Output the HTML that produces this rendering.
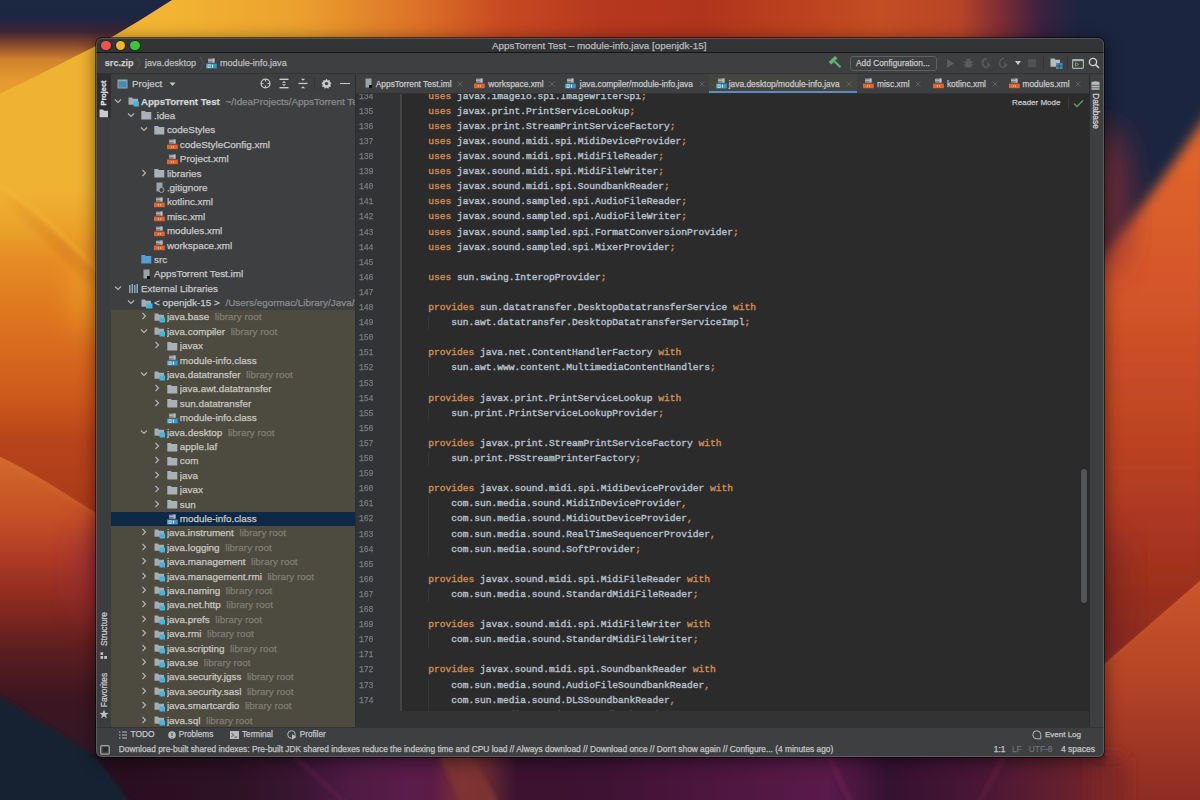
<!DOCTYPE html><html><head><meta charset="utf-8"><style>
*{margin:0;padding:0;box-sizing:border-box}
html,body{width:1200px;height:800px;overflow:hidden;background:#1b2440}
body{position:relative;font-family:"Liberation Sans",sans-serif}
.a{position:absolute}
.t{position:absolute;white-space:pre;line-height:1;-webkit-text-stroke:0.25px currentColor}
.m{font-family:"Liberation Mono",monospace}
</style></head><body>
<svg class="a" style="left:0;top:0" width="1200" height="800" viewBox="0 0 1200 800">
<defs>
<filter id="b6w" x="-100%" y="-50%" width="300%" height="200%"><feGaussianBlur stdDeviation="8"/></filter>
<filter id="b2" x="-10%" y="-10%" width="120%" height="120%"><feGaussianBlur stdDeviation="2"/></filter>
<filter id="b6" x="-20%" y="-20%" width="140%" height="140%"><feGaussianBlur stdDeviation="6"/></filter>
<filter id="b15" x="-50%" y="-50%" width="200%" height="200%"><feGaussianBlur stdDeviation="15"/></filter>
<linearGradient id="lbase" x1="0" y1="0" x2="0" y2="800" gradientUnits="userSpaceOnUse">
 <stop offset="0" stop-color="#f0b232"/><stop offset="0.2375" stop-color="#f0b232"/><stop offset="0.29" stop-color="#eaa02a"/>
 <stop offset="0.325" stop-color="#e68c24"/><stop offset="0.375" stop-color="#e07c20"/><stop offset="0.4375" stop-color="#d86a1e"/><stop offset="0.5" stop-color="#cc581c"/>
 <stop offset="0.55" stop-color="#b8441a"/><stop offset="0.64" stop-color="#a83a1a"/><stop offset="1" stop-color="#a83a1a"/>
</linearGradient>
<linearGradient id="ltop" x1="0" y1="0" x2="0" y2="100" gradientUnits="userSpaceOnUse">
 <stop offset="0" stop-color="#1c2742"/><stop offset="0.18" stop-color="#1d2641"/><stop offset="0.32" stop-color="#3e2634"/>
 <stop offset="0.45" stop-color="#8a4a2e"/><stop offset="0.6" stop-color="#d0842c"/><stop offset="0.8" stop-color="#e6982e"/><stop offset="1" stop-color="#eaa230"/>
</linearGradient>
<linearGradient id="llow" x1="0" y1="450" x2="0" y2="800" gradientUnits="userSpaceOnUse">
 <stop offset="0" stop-color="#d46c2c"/><stop offset="0.2" stop-color="#c44e26"/><stop offset="0.31" stop-color="#ae3a26"/>
 <stop offset="0.43" stop-color="#8c2b20"/><stop offset="0.57" stop-color="#5c1e20"/><stop offset="0.71" stop-color="#3c1622"/><stop offset="1" stop-color="#2a1a28"/>
</linearGradient>
<linearGradient id="rorange" x1="0" y1="120" x2="0" y2="680" gradientUnits="userSpaceOnUse">
 <stop offset="0" stop-color="#e2682a"/><stop offset="0.3" stop-color="#d4562a"/><stop offset="0.58" stop-color="#bc4222"/><stop offset="0.82" stop-color="#9e301f"/><stop offset="1" stop-color="#862820"/>
</linearGradient>
<linearGradient id="rlow" x1="0" y1="580" x2="0" y2="800" gradientUnits="userSpaceOnUse">
 <stop offset="0" stop-color="#cc562a"/><stop offset="0.45" stop-color="#b44426"/><stop offset="1" stop-color="#8e2c24"/>
</linearGradient>
<linearGradient id="ttop" x1="0" y1="0" x2="1200" y2="0" gradientUnits="userSpaceOnUse">
 <stop offset="0.143" stop-color="#f2b432"/><stop offset="0.25" stop-color="#eba02e"/><stop offset="0.35" stop-color="#dc7028"/>
 <stop offset="0.417" stop-color="#c84a22"/><stop offset="0.5" stop-color="#b6381e"/><stop offset="0.583" stop-color="#b0341c"/>
 <stop offset="0.667" stop-color="#bc421f"/><stop offset="0.733" stop-color="#c44e22"/><stop offset="0.8" stop-color="#b84428"/>
 <stop offset="0.835" stop-color="#7a2c36"/><stop offset="0.868" stop-color="#3a2240"/><stop offset="0.9" stop-color="#1b2540"/><stop offset="1" stop-color="#1b2540"/>
</linearGradient>
<linearGradient id="tnavy" x1="0" y1="0" x2="0" y2="40" gradientUnits="userSpaceOnUse">
 <stop offset="0" stop-color="#1c2742"/><stop offset="0.6" stop-color="#1e2640"/><stop offset="1" stop-color="#3a2232"/>
</linearGradient>
<linearGradient id="bot" x1="0" y1="0" x2="1200" y2="0" gradientUnits="userSpaceOnUse">
 <stop offset="0.08" stop-color="#2a1020"/><stop offset="0.11" stop-color="#2a0e1e"/><stop offset="0.2" stop-color="#2e1226"/>
 <stop offset="0.25" stop-color="#3a1632"/><stop offset="0.29" stop-color="#4e1a44"/><stop offset="0.34" stop-color="#5a1c4a"/>
 <stop offset="0.36" stop-color="#5a1c46"/><stop offset="0.385" stop-color="#7a3034"/><stop offset="0.405" stop-color="#6a2a34"/><stop offset="0.43" stop-color="#3c1230"/>
 <stop offset="0.5" stop-color="#3e1232"/><stop offset="0.6" stop-color="#4e1640"/><stop offset="0.69" stop-color="#5a1a4a"/><stop offset="0.715" stop-color="#4a1640"/>
 <stop offset="0.74" stop-color="#341230"/><stop offset="0.82" stop-color="#4a1636"/><stop offset="0.87" stop-color="#5e1e30"/>
 <stop offset="0.92" stop-color="#76242a"/><stop offset="1" stop-color="#86282a"/>
</linearGradient>
<linearGradient id="band" x1="0" y1="0" x2="100" y2="0" gradientUnits="userSpaceOnUse"><stop offset="0" stop-color="#d47a20" stop-opacity="0"/><stop offset="0.5" stop-color="#d47a20" stop-opacity="0.35"/><stop offset="1" stop-color="#d07020" stop-opacity="0.8"/></linearGradient>
</defs>
<rect width="1200" height="800" fill="#1b2540"/>
<!-- left strip -->
<g>
<rect x="0" y="0" width="110" height="800" fill="url(#lbase)"/>

<path d="M0 188 C 35 212, 70 245, 110 287 L110 302 C 80 277, 45 240, 0 200 Z" fill="url(#band)" filter="url(#b2)"/>
<path d="M-5 184 C 30 202, 60 232, 110 283" stroke="#f6c546" stroke-width="1.5" fill="none" opacity="0.7" filter="url(#b2)"/>
<ellipse cx="92" cy="290" rx="22" ry="40" fill="#eea62a" opacity="0.6" filter="url(#b15)"/>
<path d="M-10 452 C 30 470, 60 490, 110 522 L110 810 L-10 810 Z" fill="url(#llow)"/>
<path d="M-10 455 C 30 472, 60 492, 110 524" stroke="#e07a3a" stroke-width="1.2" fill="none" opacity="0.6" filter="url(#b2)"/>
<ellipse cx="100" cy="570" rx="25" ry="50" fill="#8a2840" opacity="0.5" filter="url(#b15)"/>

</g>
<!-- top strip -->
<rect x="96" y="0" width="1010" height="38" fill="url(#ttop)"/>
<path d="M-10 -10 L178 -10 L172 0 C 150 14, 125 30, 96 46 C 60 64, 30 80, -10 98 Z" fill="url(#ltop)"/>
<!-- right strip -->
<g>
<rect x="1100" y="0" width="100" height="800" fill="#1b2540"/>
<path d="M1210 110 L1210 700 L1095 700 L1095 262 C 1120 235, 1160 185, 1210 110 Z" fill="url(#rorange)" filter="url(#b6)"/>
<ellipse cx="1108" cy="200" rx="22" ry="75" fill="#8a2e36" opacity="0.75" filter="url(#b15)"/>
<ellipse cx="1112" cy="600" rx="18" ry="70" fill="#6a2220" opacity="0.4" filter="url(#b15)"/>
<path d="M1210 572 L1210 810 L1095 810 L1095 672 Z" fill="url(#rlow)"/>
<path d="M1210 573 L1095 673" stroke="#dc6a36" stroke-width="1" opacity="0.6" filter="url(#b2)"/>
</g>
<!-- bottom strip -->
<rect x="90" y="755" width="1016" height="50" fill="url(#bot)"/>



<path d="M438 755 L472 755 L500 805 L462 805 Z" fill="#7e3430" opacity="0.85" filter="url(#b2)"/>
<path d="M293 755 L348 805" stroke="#6a2052" stroke-width="3" opacity="0.7" filter="url(#b2)"/>
<path d="M828 755 L852 805" stroke="#7a2a5a" stroke-width="3" opacity="0.6" filter="url(#b2)"/>
<path d="M1005 755 L978 805" stroke="#7a2a40" stroke-width="3" opacity="0.5" filter="url(#b2)"/>
<path d="M-10 690 L 96 757 L 136 810 L-10 810 Z" fill="#172030" filter="url(#b2)"/>
<rect x="1092" y="757" width="34" height="60" fill="#7e2828" filter="url(#b6w)"/>
</svg>

<div class="a" style="left:96.2px;top:37.5px;width:1007.8px;height:719px;border-radius:6px;background:#3e3f41;overflow:hidden;box-shadow:0 0 0 1px rgba(0,0,0,0.55), 0 3px 16px 2px rgba(0,0,0,0.45)">
<div class="a" style="left:0.30px;top:0.00px;width:1007.80px;height:15.00px;background:#323436;"></div>
<div class="a" style="left:0.30px;top:14.80px;width:1007.80px;height:1.00px;background:#161617;"></div>
<div class="a" style="left:5.20px;top:3.00px;width:9.6px;height:9.6px;border-radius:50%;background:#f0524c;box-shadow:0 0 0 0.7px rgba(0,0,0,0.35)"></div>
<div class="a" style="left:19.70px;top:3.00px;width:9.6px;height:9.6px;border-radius:50%;background:#f4b52c;box-shadow:0 0 0 0.7px rgba(0,0,0,0.35)"></div>
<div class="a" style="left:34.05px;top:3.00px;width:9.6px;height:9.6px;border-radius:50%;background:#3cc43a;box-shadow:0 0 0 0.7px rgba(0,0,0,0.35)"></div>
<div class="t" style="left:395.80px;top:3.15px;font-size:9.9px;color:#b9babb;font-weight:normal;font-family:"Liberation Sans",sans-serif;">AppsTorrent Test – module-info.java [openjdk-15]</div>
<div class="a" style="left:0.30px;top:15.80px;width:1007.80px;height:20.00px;background:#3e3f41;"></div>
<div class="t" style="left:8.60px;top:21.35px;font-size:9.1px;color:#c8c9ca;font-weight:bold;font-family:"Liberation Sans",sans-serif;">src.zip</div>
<div class="t" style="left:48.80px;top:21.35px;font-size:9.1px;color:#bbbcbd;font-weight:normal;font-family:"Liberation Sans",sans-serif;">java.desktop</div>
<div class="t" style="left:123.80px;top:21.35px;font-size:9.1px;color:#bbbcbd;font-weight:normal;font-family:"Liberation Sans",sans-serif;">module-info.java</div>
<svg class="a" style="left:39.8px;top:18.9px" width="6" height="14"><path d="M1 1L4.5 7L1 13" stroke="#55585a" stroke-width="0.8" fill="none"/></svg>
<svg class="a" style="left:102.8px;top:18.9px" width="6" height="14"><path d="M1 1L4.5 7L1 13" stroke="#55585a" stroke-width="0.8" fill="none"/></svg>
<svg style="position:absolute;left:110.3px;top:20.5px" width="12" height="11" viewBox="0 0 12 11"><path d="M2 1.2H8.5M2 2.6H8.5M2 4H8.5" stroke="#b8bfc4" stroke-width="1"/><rect x="6.5" y="0.5" width="2" height="4" fill="#b8bfc4"/><rect x="0" y="5.6" width="10.8" height="4.8" fill="#3d95c4"/><rect x="2" y="6.8" width="2.2" height="2.6" fill="none" stroke="#d8e6ee" stroke-width="0.8"/><rect x="6" y="6.6" width="1" height="3" fill="#d8e6ee"/></svg>
<div class="a" style="left:753.60px;top:18.10px;width:87.00px;height:15.20px;background:transparent;border:1px solid #5e6164;border-radius:3px;"></div>
<div class="t" style="left:759.80px;top:21.71px;font-size:8.37px;color:#c4c5c6;font-weight:normal;font-family:"Liberation Sans",sans-serif;">Add Configuration...</div>
<svg class="a" style="left:733.3px;top:18.5px" width="14" height="14" viewBox="0 0 14 14"><g transform="rotate(-45 7 7)"><rect x="2.6" y="1.2" width="8.8" height="3.6" rx="0.6" fill="#62b072"/><rect x="6.1" y="4.6" width="2.1" height="8.6" fill="#62b072"/></g></svg>
<svg class="a" style="left:849.8px;top:20.5px" width="9" height="11" viewBox="0 0 9 11"><path d="M1 1L8 5.5L1 10Z" fill="#5b5e60"/></svg>
<svg class="a" style="left:866.8px;top:19.5px" width="11" height="12" viewBox="0 0 11 12"><ellipse cx="5.5" cy="7" rx="3.3" ry="3.8" fill="#5a5d5f"/><path d="M3.5 3.2Q5.5 1 7.5 3.2" stroke="#5a5d5f" stroke-width="1.4" fill="none"/><path d="M0.5 5H10.5M0.5 8H10.5M1.5 11L3 9.5M9.5 11L8 9.5" stroke="#5a5d5f" stroke-width="1"/></svg>
<svg class="a" style="left:884.8px;top:19.5px" width="12" height="12" viewBox="0 0 12 12"><path d="M6 1.5A4.5 4.5 0 1 0 6 10.5" stroke="#55585a" stroke-width="2" fill="none"/><path d="M6 5L10 8L6 11Z" fill="#55585a"/></svg>
<svg class="a" style="left:901.8px;top:19.5px" width="13" height="12" viewBox="0 0 13 12"><path d="M6 1.5A4.5 4.5 0 1 0 6 10.5" stroke="#55585a" stroke-width="1.5" fill="none"/><path d="M6 5L10 8L6 11Z" fill="#55585a"/></svg>
<svg class="a" style="left:918.8px;top:23.5px" width="6" height="4" viewBox="0 0 6 4"><path d="M0 0H6L3 4Z" fill="#c8c9ca"/></svg>
<svg class="a" style="left:932.3px;top:21.0px" width="8" height="8" viewBox="0 0 8 8"><rect width="8" height="8" fill="#4f5254"/></svg>
<div class="a" style="left:947.30px;top:18.50px;width:0.80px;height:14.00px;background:#323436;"></div>
<svg class="a" style="left:953.8px;top:19.5px" width="13" height="13" viewBox="0 0 13 13"><path d="M0.5 1.5h4l1 1.2H10v7H0.5z" fill="#b5bcc2"/><rect x="6" y="6" width="6.5" height="6" fill="#3d8fc4"/><path d="M6 9h6.5M9.2 6v6" stroke="#3e3f41" stroke-width="0.8"/></svg>
<div class="a" style="left:971.30px;top:18.50px;width:0.80px;height:14.00px;background:#323436;"></div>
<svg class="a" style="left:976.3px;top:21.0px" width="12" height="10" viewBox="0 0 12 10"><rect x="0.6" y="0.6" width="10.8" height="8.8" rx="0.8" fill="#37433b" stroke="#a9b1ac" stroke-width="1.2"/><rect x="0.6" y="0.6" width="10.8" height="1.6" fill="#a9b1ac"/><path d="M3.5 3.6L6.6 5.4L3.5 7.2Z" fill="none" stroke="#8a968e" stroke-width="0.9"/></svg>
<svg class="a" style="left:992.3px;top:19.5px" width="12" height="12" viewBox="0 0 12 12"><circle cx="5" cy="5" r="3.6" stroke="#d0d1d2" stroke-width="1.4" fill="none"/><path d="M7.6 7.6L11 11" stroke="#d0d1d2" stroke-width="1.6"/></svg>
<div class="a" style="left:0.30px;top:35.50px;width:1007.80px;height:0.80px;background:#323436;"></div>
<div class="a" style="left:0.30px;top:36.00px;width:14.50px;height:683.00px;background:#3b3d3f;"></div>
<div class="a" style="left:1.20px;top:36.30px;width:13.30px;height:44.50px;background:#2d2f31;"></div>
<div class="a" style="left:14.40px;top:36.00px;width:0.80px;height:653.00px;background:#2f3133;"></div>
<div class="t" style="left:7.40px;top:55.00px;font-size:7.4px;color:#e2e3e4;font-weight:bold;transform:translate(-50%,-50%) rotate(-90deg);">Project</div>
<svg class="a" style="left:2.8px;top:71.0px" width="10" height="9" viewBox="0 0 10 9"><path d="M0.5 0.5h3.5l1 1.2H9v6.5H0.5z" fill="#c8cacc"/></svg>
<div class="t" style="left:7.70px;top:591.00px;font-size:8.4px;color:#c8c9ca;font-weight:normal;transform:translate(-50%,-50%) rotate(-90deg);">Structure</div>
<svg class="a" style="left:3.8px;top:614.0px" width="8" height="8" viewBox="0 0 8 8"><rect x="0.5" y="0.3" width="2.6" height="2.6" fill="#c4c5c6"/><rect x="0.5" y="4" width="2.6" height="2.8" fill="#c4c5c6"/><rect x="4.2" y="4" width="2.8" height="2.8" fill="#c4c5c6"/></svg>
<div class="t" style="left:7.70px;top:652.50px;font-size:8.4px;color:#c8c9ca;font-weight:normal;transform:translate(-50%,-50%) rotate(-90deg);">Favorites</div>
<svg class="a" style="left:2.6px;top:671.5px" width="10" height="10" viewBox="0 0 10 10"><path d="M5 0.5L6.3 3.7L9.6 3.9L7 6L7.9 9.3L5 7.5L2.1 9.3L3 6L0.4 3.9L3.7 3.7Z" fill="#b9babb"/></svg>
<div class="a" style="left:15.20px;top:36.30px;width:244.00px;height:653.00px;background:#3e3f41;"></div>
<svg class="a" style="left:21.3px;top:41.5px" width="11" height="10" viewBox="0 0 11 10"><rect x="0.5" y="0.5" width="10" height="9" fill="#9aa3a9"/><rect x="1.5" y="2.2" width="8" height="6.3" fill="#3d8fb8"/></svg>
<div class="t" style="left:35.80px;top:41.43px;font-size:9.74px;color:#c4c5c6;font-weight:normal;font-family:"Liberation Sans",sans-serif;">Project</div>
<svg class="a" style="left:72.6px;top:44.3px" width="7" height="5" viewBox="0 0 7 5"><path d="M0.5 0.5H6.5L3.5 4Z" fill="#c4c5c6"/></svg>
<svg class="a" style="left:163.8px;top:40.3px" width="11" height="11" viewBox="0 0 11 11"><circle cx="5.5" cy="5.5" r="4.4" stroke="#c9cacb" stroke-width="1.3" fill="none"/><path d="M5.5 1.2V3.4M5.5 7.6V9.8M1.2 5.5H3.4M7.6 5.5H9.8" stroke="#c9cacb" stroke-width="1.2"/></svg>
<svg class="a" style="left:183.1px;top:40.3px" width="10" height="11" viewBox="0 0 10 11"><rect x="0.5" y="0.6" width="9" height="1.4" fill="#c9cacb"/><rect x="0.5" y="9" width="9" height="1.4" fill="#c9cacb"/><path d="M2.8 4.8L5 3L7.2 4.8ZM2.8 6.2L5 8L7.2 6.2Z" fill="#c9cacb"/></svg>
<svg class="a" style="left:201.6px;top:40.3px" width="10" height="11" viewBox="0 0 10 11"><rect x="0.5" y="4.8" width="9" height="1.3" fill="#c9cacb"/><path d="M2.8 0.8L5 2.8L7.2 0.8ZM2.8 10.2L5 8.2L7.2 10.2Z" fill="#c9cacb"/></svg>
<div class="a" style="left:218.30px;top:39.50px;width:0.80px;height:13.00px;background:#363739;"></div>
<svg class="a" style="left:225.0px;top:40.3px" width="11" height="11" viewBox="0 0 11 11"><path d="M5.5 0.6L6.6 2.4L8.6 1.9L8.9 3.9L10.6 5L9.3 6.6L10 8.5L8 8.9L7.2 10.7L5.5 9.6L3.8 10.7L3 8.9L1 8.5L1.7 6.6L0.4 5L2.1 3.9L2.4 1.9L4.4 2.4Z" fill="#c9cacb"/><circle cx="5.5" cy="5.6" r="1.7" fill="#3e3f41"/></svg>
<div class="a" style="left:244.30px;top:45.10px;width:9.50px;height:1.30px;background:#c9cacb;"></div>
<div class="a" style="left:15.20px;top:272.73px;width:244.00px;height:14.70px;background:#4d4a40;"></div>
<div class="a" style="left:15.20px;top:287.12px;width:244.00px;height:14.70px;background:#4d4a40;"></div>
<div class="a" style="left:15.20px;top:301.52px;width:244.00px;height:14.70px;background:#4d4a40;"></div>
<div class="a" style="left:15.20px;top:315.91px;width:244.00px;height:14.70px;background:#4d4a40;"></div>
<div class="a" style="left:15.20px;top:330.31px;width:244.00px;height:14.70px;background:#4d4a40;"></div>
<div class="a" style="left:15.20px;top:344.70px;width:244.00px;height:14.70px;background:#4d4a40;"></div>
<div class="a" style="left:15.20px;top:359.10px;width:244.00px;height:14.70px;background:#4d4a40;"></div>
<div class="a" style="left:15.20px;top:373.49px;width:244.00px;height:14.70px;background:#4d4a40;"></div>
<div class="a" style="left:15.20px;top:387.89px;width:244.00px;height:14.70px;background:#4d4a40;"></div>
<div class="a" style="left:15.20px;top:402.28px;width:244.00px;height:14.70px;background:#4d4a40;"></div>
<div class="a" style="left:15.20px;top:416.68px;width:244.00px;height:14.70px;background:#4d4a40;"></div>
<div class="a" style="left:15.20px;top:431.07px;width:244.00px;height:14.70px;background:#4d4a40;"></div>
<div class="a" style="left:15.20px;top:445.47px;width:244.00px;height:14.70px;background:#4d4a40;"></div>
<div class="a" style="left:15.20px;top:459.86px;width:244.00px;height:14.70px;background:#4d4a40;"></div>
<div class="a" style="left:15.20px;top:474.26px;width:244.00px;height:14.70px;background:#0d2945;"></div>
<div class="a" style="left:15.20px;top:488.65px;width:244.00px;height:14.70px;background:#4d4a40;"></div>
<div class="a" style="left:15.20px;top:503.05px;width:244.00px;height:14.70px;background:#4d4a40;"></div>
<div class="a" style="left:15.20px;top:517.44px;width:244.00px;height:14.70px;background:#4d4a40;"></div>
<div class="a" style="left:15.20px;top:531.84px;width:244.00px;height:14.70px;background:#4d4a40;"></div>
<div class="a" style="left:15.20px;top:546.23px;width:244.00px;height:14.70px;background:#4d4a40;"></div>
<div class="a" style="left:15.20px;top:560.63px;width:244.00px;height:14.70px;background:#4d4a40;"></div>
<div class="a" style="left:15.20px;top:575.02px;width:244.00px;height:14.70px;background:#4d4a40;"></div>
<div class="a" style="left:15.20px;top:589.42px;width:244.00px;height:14.70px;background:#4d4a40;"></div>
<div class="a" style="left:15.20px;top:603.81px;width:244.00px;height:14.70px;background:#4d4a40;"></div>
<div class="a" style="left:15.20px;top:618.21px;width:244.00px;height:14.70px;background:#4d4a40;"></div>
<div class="a" style="left:15.20px;top:632.60px;width:244.00px;height:14.70px;background:#4d4a40;"></div>
<div class="a" style="left:15.20px;top:647.00px;width:244.00px;height:14.70px;background:#4d4a40;"></div>
<div class="a" style="left:15.20px;top:661.39px;width:244.00px;height:14.70px;background:#4d4a40;"></div>
<div class="a" style="left:15.20px;top:675.79px;width:244.00px;height:13.31px;background:#4d4a40;"></div>

<svg class="a" style="left:18.2px;top:59.0px" width="8" height="8" viewBox="0 0 8 8"><path d="M1.0 2.5L4.0 5.5L7.0 2.5" stroke="#b4b5b6" stroke-width="1.15" fill="none"/></svg>
<svg style="position:absolute;left:31.7px;top:58.5px" width="12" height="11" viewBox="0 0 12 11"><path d="M0.5 1.5h3.5l1 1.2H10v6H0.5z" fill="#a4adb3"/><rect x="5.5" y="5.5" width="5.5" height="5" fill="#40b6e0"/></svg>
<div class="t" style="left:44.80px;top:57.24px;line-height:1.4;font-size:9.65px;color:#d4d5d6;font-weight:bold;width:214.4px;overflow:hidden">AppsTorrent Test<span style="font-weight:normal;color:#8a8b8c;font-size:9.9px;margin-left:5.6px">~/IdeaProjects/AppsTorrent Test</span></div>

<svg class="a" style="left:31.1px;top:73.4px" width="8" height="8" viewBox="0 0 8 8"><path d="M1.0 2.5L4.0 5.5L7.0 2.5" stroke="#b4b5b6" stroke-width="1.15" fill="none"/></svg>
<svg style="position:absolute;left:44.6px;top:72.9px" width="12" height="11" viewBox="0 0 12 11"><path d="M0.3 1h3.6l1 1.1H10.3v7.5H0.3z" fill="#a9b1b7"/></svg>
<div class="t" style="left:57.75px;top:71.47px;line-height:1.4;font-size:9.9px;color:#c8c9ca;font-weight:normal;width:201.4px;overflow:hidden">.idea</div>

<svg class="a" style="left:44.1px;top:87.8px" width="8" height="8" viewBox="0 0 8 8"><path d="M1.0 2.5L4.0 5.5L7.0 2.5" stroke="#b4b5b6" stroke-width="1.15" fill="none"/></svg>
<svg style="position:absolute;left:57.6px;top:87.3px" width="12" height="11" viewBox="0 0 12 11"><path d="M0.3 1h3.6l1 1.1H10.3v7.5H0.3z" fill="#a9b1b7"/></svg>
<div class="t" style="left:70.70px;top:85.86px;line-height:1.4;font-size:9.9px;color:#c8c9ca;font-weight:normal;width:188.5px;overflow:hidden">codeStyles</div>
<svg style="position:absolute;left:70.5px;top:101.7px" width="12" height="11" viewBox="0 0 12 11"><path d="M2 1.2H8.5M2 2.6H8.5M2 4H8.5" stroke="#b8bfc4" stroke-width="1"/><rect x="6.5" y="0.5" width="2" height="4" fill="#b8bfc4"/><rect x="0" y="5.6" width="10.8" height="4.6" fill="#e0652d"/><path d="M3.6 7.9l1.2-1v2zM7.2 7.9l-1.2-1v2z" fill="#f4d6c6"/></svg>
<div class="t" style="left:83.65px;top:100.25px;line-height:1.4;font-size:9.9px;color:#c8c9ca;font-weight:normal;width:175.5px;overflow:hidden">codeStyleConfig.xml</div>
<svg style="position:absolute;left:70.5px;top:116.1px" width="12" height="11" viewBox="0 0 12 11"><path d="M2 1.2H8.5M2 2.6H8.5M2 4H8.5" stroke="#b8bfc4" stroke-width="1"/><rect x="6.5" y="0.5" width="2" height="4" fill="#b8bfc4"/><rect x="0" y="5.6" width="10.8" height="4.6" fill="#e0652d"/><path d="M3.6 7.9l1.2-1v2zM7.2 7.9l-1.2-1v2z" fill="#f4d6c6"/></svg>
<div class="t" style="left:83.65px;top:114.65px;line-height:1.4;font-size:9.9px;color:#c8c9ca;font-weight:normal;width:175.5px;overflow:hidden">Project.xml</div>

<svg class="a" style="left:44.1px;top:131.0px" width="8" height="8" viewBox="0 0 8 8"><path d="M2.5 1.0L5.5 4.0L2.5 7.0" stroke="#b4b5b6" stroke-width="1.15" fill="none"/></svg>
<svg style="position:absolute;left:57.6px;top:130.5px" width="12" height="11" viewBox="0 0 12 11"><path d="M0.3 1h3.6l1 1.1H10.3v7.5H0.3z" fill="#a9b1b7"/></svg>
<div class="t" style="left:70.70px;top:129.04px;line-height:1.4;font-size:9.9px;color:#c8c9ca;font-weight:normal;width:188.5px;overflow:hidden">libraries</div>
<svg style="position:absolute;left:57.6px;top:144.9px" width="12" height="11" viewBox="0 0 12 11"><rect x="2.5" y="0.5" width="6" height="9" fill="#9aa3a9"/><circle cx="7.5" cy="8" r="2.5" fill="#3e3f41" stroke="#9aa3a9" stroke-width="1"/></svg>
<div class="t" style="left:70.70px;top:143.44px;line-height:1.4;font-size:9.9px;color:#c8c9ca;font-weight:normal;width:188.5px;overflow:hidden">.gitignore</div>
<svg style="position:absolute;left:57.6px;top:159.3px" width="12" height="11" viewBox="0 0 12 11"><path d="M2 1.2H8.5M2 2.6H8.5M2 4H8.5" stroke="#b8bfc4" stroke-width="1"/><rect x="6.5" y="0.5" width="2" height="4" fill="#b8bfc4"/><rect x="0" y="5.6" width="10.8" height="4.6" fill="#e0652d"/><path d="M3.6 7.9l1.2-1v2zM7.2 7.9l-1.2-1v2z" fill="#f4d6c6"/></svg>
<div class="t" style="left:70.70px;top:157.83px;line-height:1.4;font-size:9.9px;color:#c8c9ca;font-weight:normal;width:188.5px;overflow:hidden">kotlinc.xml</div>
<svg style="position:absolute;left:57.6px;top:173.7px" width="12" height="11" viewBox="0 0 12 11"><path d="M2 1.2H8.5M2 2.6H8.5M2 4H8.5" stroke="#b8bfc4" stroke-width="1"/><rect x="6.5" y="0.5" width="2" height="4" fill="#b8bfc4"/><rect x="0" y="5.6" width="10.8" height="4.6" fill="#e0652d"/><path d="M3.6 7.9l1.2-1v2zM7.2 7.9l-1.2-1v2z" fill="#f4d6c6"/></svg>
<div class="t" style="left:70.70px;top:172.23px;line-height:1.4;font-size:9.9px;color:#c8c9ca;font-weight:normal;width:188.5px;overflow:hidden">misc.xml</div>
<svg style="position:absolute;left:57.6px;top:188.1px" width="12" height="11" viewBox="0 0 12 11"><path d="M2 1.2H8.5M2 2.6H8.5M2 4H8.5" stroke="#b8bfc4" stroke-width="1"/><rect x="6.5" y="0.5" width="2" height="4" fill="#b8bfc4"/><rect x="0" y="5.6" width="10.8" height="4.6" fill="#e0652d"/><path d="M3.6 7.9l1.2-1v2zM7.2 7.9l-1.2-1v2z" fill="#f4d6c6"/></svg>
<div class="t" style="left:70.70px;top:186.62px;line-height:1.4;font-size:9.9px;color:#c8c9ca;font-weight:normal;width:188.5px;overflow:hidden">modules.xml</div>
<svg style="position:absolute;left:57.6px;top:202.4px" width="12" height="11" viewBox="0 0 12 11"><path d="M2 1.2H8.5M2 2.6H8.5M2 4H8.5" stroke="#b8bfc4" stroke-width="1"/><rect x="6.5" y="0.5" width="2" height="4" fill="#b8bfc4"/><rect x="0" y="5.6" width="10.8" height="4.6" fill="#e0652d"/><path d="M3.6 7.9l1.2-1v2zM7.2 7.9l-1.2-1v2z" fill="#f4d6c6"/></svg>
<div class="t" style="left:70.70px;top:201.02px;line-height:1.4;font-size:9.9px;color:#c8c9ca;font-weight:normal;width:188.5px;overflow:hidden">workspace.xml</div>
<svg style="position:absolute;left:44.6px;top:216.8px" width="12" height="11" viewBox="0 0 12 11"><path d="M0.3 1h3.6l1 1.1H10.3v7.5H0.3z" fill="#4f9fd6"/></svg>
<div class="t" style="left:57.75px;top:215.41px;line-height:1.4;font-size:9.9px;color:#c8c9ca;font-weight:normal;width:201.4px;overflow:hidden">src</div>
<svg style="position:absolute;left:44.6px;top:231.2px" width="12" height="11" viewBox="0 0 12 11"><rect x="2.5" y="0.5" width="6" height="9" fill="#9aa3a9"/><rect x="6" y="7" width="3" height="3" fill="#111"/></svg>
<div class="t" style="left:57.75px;top:229.81px;line-height:1.4;font-size:9.9px;color:#c8c9ca;font-weight:normal;width:201.4px;overflow:hidden">AppsTorrent Test.iml</div>

<svg class="a" style="left:18.2px;top:246.1px" width="8" height="8" viewBox="0 0 8 8"><path d="M1.0 2.5L4.0 5.5L7.0 2.5" stroke="#b4b5b6" stroke-width="1.15" fill="none"/></svg>
<svg style="position:absolute;left:31.7px;top:245.6px" width="12" height="11" viewBox="0 0 12 11"><rect x="1" y="2" width="1.5" height="8" fill="#9aa3a9"/><rect x="3.5" y="1" width="1.5" height="9" fill="#9aa3a9"/><rect x="6" y="2" width="1.5" height="8" fill="#5fb7e0"/><rect x="8.5" y="1" width="1.5" height="9" fill="#9aa3a9"/></svg>
<div class="t" style="left:44.80px;top:244.20px;line-height:1.4;font-size:9.9px;color:#c8c9ca;font-weight:normal;width:214.4px;overflow:hidden">External Libraries</div>

<svg class="a" style="left:31.1px;top:260.5px" width="8" height="8" viewBox="0 0 8 8"><path d="M1.0 2.5L4.0 5.5L7.0 2.5" stroke="#b4b5b6" stroke-width="1.15" fill="none"/></svg>
<svg style="position:absolute;left:44.6px;top:260.0px" width="12" height="11" viewBox="0 0 12 11"><path d="M0.5 1.5h3.5l1 1.2H10v6H0.5z" fill="#a4adb3"/><rect x="5" y="5.5" width="6.5" height="5" fill="#40b6e0"/></svg>
<div class="t" style="left:57.75px;top:258.60px;line-height:1.4;font-size:9.9px;color:#c8c9ca;font-weight:normal;width:201.4px;overflow:hidden">&lt; openjdk-15 &gt;<span style="font-weight:normal;color:#8a8b8c;font-size:9.9px;margin-left:5.6px">/Users/egormac/Library/Java/JavaVirtualMachines</span></div>

<svg class="a" style="left:44.1px;top:274.9px" width="8" height="8" viewBox="0 0 8 8"><path d="M2.5 1.0L5.5 4.0L2.5 7.0" stroke="#b4b5b6" stroke-width="1.15" fill="none"/></svg>
<svg style="position:absolute;left:57.6px;top:274.4px" width="12" height="11" viewBox="0 0 12 11"><path d="M0.5 1.5h3.5l1 1.2H10v6H0.5z" fill="#a4adb3"/><rect x="5.5" y="5.5" width="5.5" height="5" fill="#40b6e0"/></svg>
<div class="t" style="left:70.70px;top:272.99px;line-height:1.4;font-size:9.9px;color:#c9c8c0;font-weight:normal;width:188.5px;overflow:hidden">java.base<span style="font-weight:normal;color:#807e74;font-size:9.9px;margin-left:5.6px">library root</span></div>

<svg class="a" style="left:44.1px;top:289.3px" width="8" height="8" viewBox="0 0 8 8"><path d="M1.0 2.5L4.0 5.5L7.0 2.5" stroke="#b4b5b6" stroke-width="1.15" fill="none"/></svg>
<svg style="position:absolute;left:57.6px;top:288.8px" width="12" height="11" viewBox="0 0 12 11"><path d="M0.5 1.5h3.5l1 1.2H10v6H0.5z" fill="#a4adb3"/><rect x="5.5" y="5.5" width="5.5" height="5" fill="#40b6e0"/></svg>
<div class="t" style="left:70.70px;top:287.39px;line-height:1.4;font-size:9.9px;color:#c9c8c0;font-weight:normal;width:188.5px;overflow:hidden">java.compiler<span style="font-weight:normal;color:#807e74;font-size:9.9px;margin-left:5.6px">library root</span></div>

<svg class="a" style="left:57.0px;top:303.7px" width="8" height="8" viewBox="0 0 8 8"><path d="M2.5 1.0L5.5 4.0L2.5 7.0" stroke="#b4b5b6" stroke-width="1.15" fill="none"/></svg>
<svg style="position:absolute;left:70.5px;top:303.2px" width="12" height="11" viewBox="0 0 12 11"><path d="M0.3 1h3.6l1 1.1H10.3v7.5H0.3z" fill="#a9b1b7"/></svg>
<div class="t" style="left:83.65px;top:301.78px;line-height:1.4;font-size:9.9px;color:#c9c8c0;font-weight:normal;width:175.5px;overflow:hidden">javax</div>
<svg style="position:absolute;left:70.5px;top:317.6px" width="12" height="11" viewBox="0 0 12 11"><path d="M2 1.2H8.5M2 2.6H8.5M2 4H8.5" stroke="#b8bfc4" stroke-width="1"/><rect x="6.5" y="0.5" width="2" height="4" fill="#b8bfc4"/><rect x="0" y="5.6" width="10.8" height="4.8" fill="#3d95c4"/><rect x="2" y="6.8" width="2.2" height="2.6" fill="none" stroke="#d8e6ee" stroke-width="0.8"/><rect x="6" y="6.6" width="1" height="3" fill="#d8e6ee"/></svg>
<div class="t" style="left:83.65px;top:316.18px;line-height:1.4;font-size:9.9px;color:#c9c8c0;font-weight:normal;width:175.5px;overflow:hidden">module-info.class</div>

<svg class="a" style="left:44.1px;top:332.5px" width="8" height="8" viewBox="0 0 8 8"><path d="M1.0 2.5L4.0 5.5L7.0 2.5" stroke="#b4b5b6" stroke-width="1.15" fill="none"/></svg>
<svg style="position:absolute;left:57.6px;top:332.0px" width="12" height="11" viewBox="0 0 12 11"><path d="M0.5 1.5h3.5l1 1.2H10v6H0.5z" fill="#a4adb3"/><rect x="5.5" y="5.5" width="5.5" height="5" fill="#40b6e0"/></svg>
<div class="t" style="left:70.70px;top:330.57px;line-height:1.4;font-size:9.9px;color:#c9c8c0;font-weight:normal;width:188.5px;overflow:hidden">java.datatransfer<span style="font-weight:normal;color:#807e74;font-size:9.9px;margin-left:5.6px">library root</span></div>

<svg class="a" style="left:57.0px;top:346.9px" width="8" height="8" viewBox="0 0 8 8"><path d="M2.5 1.0L5.5 4.0L2.5 7.0" stroke="#b4b5b6" stroke-width="1.15" fill="none"/></svg>
<svg style="position:absolute;left:70.5px;top:346.4px" width="12" height="11" viewBox="0 0 12 11"><path d="M0.3 1h3.6l1 1.1H10.3v7.5H0.3z" fill="#a9b1b7"/></svg>
<div class="t" style="left:83.65px;top:344.97px;line-height:1.4;font-size:9.9px;color:#c9c8c0;font-weight:normal;width:175.5px;overflow:hidden">java.awt.datatransfer</div>

<svg class="a" style="left:57.0px;top:361.3px" width="8" height="8" viewBox="0 0 8 8"><path d="M2.5 1.0L5.5 4.0L2.5 7.0" stroke="#b4b5b6" stroke-width="1.15" fill="none"/></svg>
<svg style="position:absolute;left:70.5px;top:360.8px" width="12" height="11" viewBox="0 0 12 11"><path d="M0.3 1h3.6l1 1.1H10.3v7.5H0.3z" fill="#a9b1b7"/></svg>
<div class="t" style="left:83.65px;top:359.37px;line-height:1.4;font-size:9.9px;color:#c9c8c0;font-weight:normal;width:175.5px;overflow:hidden">sun.datatransfer</div>
<svg style="position:absolute;left:70.5px;top:375.2px" width="12" height="11" viewBox="0 0 12 11"><path d="M2 1.2H8.5M2 2.6H8.5M2 4H8.5" stroke="#b8bfc4" stroke-width="1"/><rect x="6.5" y="0.5" width="2" height="4" fill="#b8bfc4"/><rect x="0" y="5.6" width="10.8" height="4.8" fill="#3d95c4"/><rect x="2" y="6.8" width="2.2" height="2.6" fill="none" stroke="#d8e6ee" stroke-width="0.8"/><rect x="6" y="6.6" width="1" height="3" fill="#d8e6ee"/></svg>
<div class="t" style="left:83.65px;top:373.76px;line-height:1.4;font-size:9.9px;color:#c9c8c0;font-weight:normal;width:175.5px;overflow:hidden">module-info.class</div>

<svg class="a" style="left:44.1px;top:390.1px" width="8" height="8" viewBox="0 0 8 8"><path d="M1.0 2.5L4.0 5.5L7.0 2.5" stroke="#b4b5b6" stroke-width="1.15" fill="none"/></svg>
<svg style="position:absolute;left:57.6px;top:389.6px" width="12" height="11" viewBox="0 0 12 11"><path d="M0.5 1.5h3.5l1 1.2H10v6H0.5z" fill="#a4adb3"/><rect x="5.5" y="5.5" width="5.5" height="5" fill="#40b6e0"/></svg>
<div class="t" style="left:70.70px;top:388.15px;line-height:1.4;font-size:9.9px;color:#c9c8c0;font-weight:normal;width:188.5px;overflow:hidden">java.desktop<span style="font-weight:normal;color:#807e74;font-size:9.9px;margin-left:5.6px">library root</span></div>

<svg class="a" style="left:57.0px;top:404.5px" width="8" height="8" viewBox="0 0 8 8"><path d="M2.5 1.0L5.5 4.0L2.5 7.0" stroke="#b4b5b6" stroke-width="1.15" fill="none"/></svg>
<svg style="position:absolute;left:70.5px;top:404.0px" width="12" height="11" viewBox="0 0 12 11"><path d="M0.3 1h3.6l1 1.1H10.3v7.5H0.3z" fill="#a9b1b7"/></svg>
<div class="t" style="left:83.65px;top:402.55px;line-height:1.4;font-size:9.9px;color:#c9c8c0;font-weight:normal;width:175.5px;overflow:hidden">apple.laf</div>

<svg class="a" style="left:57.0px;top:418.9px" width="8" height="8" viewBox="0 0 8 8"><path d="M2.5 1.0L5.5 4.0L2.5 7.0" stroke="#b4b5b6" stroke-width="1.15" fill="none"/></svg>
<svg style="position:absolute;left:70.5px;top:418.4px" width="12" height="11" viewBox="0 0 12 11"><path d="M0.3 1h3.6l1 1.1H10.3v7.5H0.3z" fill="#a9b1b7"/></svg>
<div class="t" style="left:83.65px;top:416.94px;line-height:1.4;font-size:9.9px;color:#c9c8c0;font-weight:normal;width:175.5px;overflow:hidden">com</div>

<svg class="a" style="left:57.0px;top:433.3px" width="8" height="8" viewBox="0 0 8 8"><path d="M2.5 1.0L5.5 4.0L2.5 7.0" stroke="#b4b5b6" stroke-width="1.15" fill="none"/></svg>
<svg style="position:absolute;left:70.5px;top:432.8px" width="12" height="11" viewBox="0 0 12 11"><path d="M0.3 1h3.6l1 1.1H10.3v7.5H0.3z" fill="#a9b1b7"/></svg>
<div class="t" style="left:83.65px;top:431.34px;line-height:1.4;font-size:9.9px;color:#c9c8c0;font-weight:normal;width:175.5px;overflow:hidden">java</div>

<svg class="a" style="left:57.0px;top:447.7px" width="8" height="8" viewBox="0 0 8 8"><path d="M2.5 1.0L5.5 4.0L2.5 7.0" stroke="#b4b5b6" stroke-width="1.15" fill="none"/></svg>
<svg style="position:absolute;left:70.5px;top:447.2px" width="12" height="11" viewBox="0 0 12 11"><path d="M0.3 1h3.6l1 1.1H10.3v7.5H0.3z" fill="#a9b1b7"/></svg>
<div class="t" style="left:83.65px;top:445.73px;line-height:1.4;font-size:9.9px;color:#c9c8c0;font-weight:normal;width:175.5px;overflow:hidden">javax</div>

<svg class="a" style="left:57.0px;top:462.1px" width="8" height="8" viewBox="0 0 8 8"><path d="M2.5 1.0L5.5 4.0L2.5 7.0" stroke="#b4b5b6" stroke-width="1.15" fill="none"/></svg>
<svg style="position:absolute;left:70.5px;top:461.6px" width="12" height="11" viewBox="0 0 12 11"><path d="M0.3 1h3.6l1 1.1H10.3v7.5H0.3z" fill="#a9b1b7"/></svg>
<div class="t" style="left:83.65px;top:460.13px;line-height:1.4;font-size:9.9px;color:#c9c8c0;font-weight:normal;width:175.5px;overflow:hidden">sun</div>
<svg style="position:absolute;left:70.5px;top:476.0px" width="12" height="11" viewBox="0 0 12 11"><path d="M2 1.2H8.5M2 2.6H8.5M2 4H8.5" stroke="#b8bfc4" stroke-width="1"/><rect x="6.5" y="0.5" width="2" height="4" fill="#b8bfc4"/><rect x="0" y="5.6" width="10.8" height="4.8" fill="#3d95c4"/><rect x="2" y="6.8" width="2.2" height="2.6" fill="none" stroke="#d8e6ee" stroke-width="0.8"/><rect x="6" y="6.6" width="1" height="3" fill="#d8e6ee"/></svg>
<div class="t" style="left:83.65px;top:474.53px;line-height:1.4;font-size:9.9px;color:#c8c9ca;font-weight:normal;width:175.5px;overflow:hidden">module-info.class</div>

<svg class="a" style="left:44.1px;top:490.8px" width="8" height="8" viewBox="0 0 8 8"><path d="M2.5 1.0L5.5 4.0L2.5 7.0" stroke="#b4b5b6" stroke-width="1.15" fill="none"/></svg>
<svg style="position:absolute;left:57.6px;top:490.3px" width="12" height="11" viewBox="0 0 12 11"><path d="M0.5 1.5h3.5l1 1.2H10v6H0.5z" fill="#a4adb3"/><rect x="5.5" y="5.5" width="5.5" height="5" fill="#40b6e0"/></svg>
<div class="t" style="left:70.70px;top:488.92px;line-height:1.4;font-size:9.9px;color:#c9c8c0;font-weight:normal;width:188.5px;overflow:hidden">java.instrument<span style="font-weight:normal;color:#807e74;font-size:9.9px;margin-left:5.6px">library root</span></div>

<svg class="a" style="left:44.1px;top:505.2px" width="8" height="8" viewBox="0 0 8 8"><path d="M2.5 1.0L5.5 4.0L2.5 7.0" stroke="#b4b5b6" stroke-width="1.15" fill="none"/></svg>
<svg style="position:absolute;left:57.6px;top:504.7px" width="12" height="11" viewBox="0 0 12 11"><path d="M0.5 1.5h3.5l1 1.2H10v6H0.5z" fill="#a4adb3"/><rect x="5.5" y="5.5" width="5.5" height="5" fill="#40b6e0"/></svg>
<div class="t" style="left:70.70px;top:503.31px;line-height:1.4;font-size:9.9px;color:#c9c8c0;font-weight:normal;width:188.5px;overflow:hidden">java.logging<span style="font-weight:normal;color:#807e74;font-size:9.9px;margin-left:5.6px">library root</span></div>

<svg class="a" style="left:44.1px;top:519.6px" width="8" height="8" viewBox="0 0 8 8"><path d="M2.5 1.0L5.5 4.0L2.5 7.0" stroke="#b4b5b6" stroke-width="1.15" fill="none"/></svg>
<svg style="position:absolute;left:57.6px;top:519.1px" width="12" height="11" viewBox="0 0 12 11"><path d="M0.5 1.5h3.5l1 1.2H10v6H0.5z" fill="#a4adb3"/><rect x="5.5" y="5.5" width="5.5" height="5" fill="#40b6e0"/></svg>
<div class="t" style="left:70.70px;top:517.71px;line-height:1.4;font-size:9.9px;color:#c9c8c0;font-weight:normal;width:188.5px;overflow:hidden">java.management<span style="font-weight:normal;color:#807e74;font-size:9.9px;margin-left:5.6px">library root</span></div>

<svg class="a" style="left:44.1px;top:534.0px" width="8" height="8" viewBox="0 0 8 8"><path d="M2.5 1.0L5.5 4.0L2.5 7.0" stroke="#b4b5b6" stroke-width="1.15" fill="none"/></svg>
<svg style="position:absolute;left:57.6px;top:533.5px" width="12" height="11" viewBox="0 0 12 11"><path d="M0.5 1.5h3.5l1 1.2H10v6H0.5z" fill="#a4adb3"/><rect x="5.5" y="5.5" width="5.5" height="5" fill="#40b6e0"/></svg>
<div class="t" style="left:70.70px;top:532.11px;line-height:1.4;font-size:9.9px;color:#c9c8c0;font-weight:normal;width:188.5px;overflow:hidden">java.management.rmi<span style="font-weight:normal;color:#807e74;font-size:9.9px;margin-left:5.6px">library root</span></div>

<svg class="a" style="left:44.1px;top:548.4px" width="8" height="8" viewBox="0 0 8 8"><path d="M2.5 1.0L5.5 4.0L2.5 7.0" stroke="#b4b5b6" stroke-width="1.15" fill="none"/></svg>
<svg style="position:absolute;left:57.6px;top:547.9px" width="12" height="11" viewBox="0 0 12 11"><path d="M0.5 1.5h3.5l1 1.2H10v6H0.5z" fill="#a4adb3"/><rect x="5.5" y="5.5" width="5.5" height="5" fill="#40b6e0"/></svg>
<div class="t" style="left:70.70px;top:546.50px;line-height:1.4;font-size:9.9px;color:#c9c8c0;font-weight:normal;width:188.5px;overflow:hidden">java.naming<span style="font-weight:normal;color:#807e74;font-size:9.9px;margin-left:5.6px">library root</span></div>

<svg class="a" style="left:44.1px;top:562.8px" width="8" height="8" viewBox="0 0 8 8"><path d="M2.5 1.0L5.5 4.0L2.5 7.0" stroke="#b4b5b6" stroke-width="1.15" fill="none"/></svg>
<svg style="position:absolute;left:57.6px;top:562.3px" width="12" height="11" viewBox="0 0 12 11"><path d="M0.5 1.5h3.5l1 1.2H10v6H0.5z" fill="#a4adb3"/><rect x="5.5" y="5.5" width="5.5" height="5" fill="#40b6e0"/></svg>
<div class="t" style="left:70.70px;top:560.89px;line-height:1.4;font-size:9.9px;color:#c9c8c0;font-weight:normal;width:188.5px;overflow:hidden">java.net.http<span style="font-weight:normal;color:#807e74;font-size:9.9px;margin-left:5.6px">library root</span></div>

<svg class="a" style="left:44.1px;top:577.2px" width="8" height="8" viewBox="0 0 8 8"><path d="M2.5 1.0L5.5 4.0L2.5 7.0" stroke="#b4b5b6" stroke-width="1.15" fill="none"/></svg>
<svg style="position:absolute;left:57.6px;top:576.7px" width="12" height="11" viewBox="0 0 12 11"><path d="M0.5 1.5h3.5l1 1.2H10v6H0.5z" fill="#a4adb3"/><rect x="5.5" y="5.5" width="5.5" height="5" fill="#40b6e0"/></svg>
<div class="t" style="left:70.70px;top:575.29px;line-height:1.4;font-size:9.9px;color:#c9c8c0;font-weight:normal;width:188.5px;overflow:hidden">java.prefs<span style="font-weight:normal;color:#807e74;font-size:9.9px;margin-left:5.6px">library root</span></div>

<svg class="a" style="left:44.1px;top:591.6px" width="8" height="8" viewBox="0 0 8 8"><path d="M2.5 1.0L5.5 4.0L2.5 7.0" stroke="#b4b5b6" stroke-width="1.15" fill="none"/></svg>
<svg style="position:absolute;left:57.6px;top:591.1px" width="12" height="11" viewBox="0 0 12 11"><path d="M0.5 1.5h3.5l1 1.2H10v6H0.5z" fill="#a4adb3"/><rect x="5.5" y="5.5" width="5.5" height="5" fill="#40b6e0"/></svg>
<div class="t" style="left:70.70px;top:589.69px;line-height:1.4;font-size:9.9px;color:#c9c8c0;font-weight:normal;width:188.5px;overflow:hidden">java.rmi<span style="font-weight:normal;color:#807e74;font-size:9.9px;margin-left:5.6px">library root</span></div>

<svg class="a" style="left:44.1px;top:606.0px" width="8" height="8" viewBox="0 0 8 8"><path d="M2.5 1.0L5.5 4.0L2.5 7.0" stroke="#b4b5b6" stroke-width="1.15" fill="none"/></svg>
<svg style="position:absolute;left:57.6px;top:605.5px" width="12" height="11" viewBox="0 0 12 11"><path d="M0.5 1.5h3.5l1 1.2H10v6H0.5z" fill="#a4adb3"/><rect x="5.5" y="5.5" width="5.5" height="5" fill="#40b6e0"/></svg>
<div class="t" style="left:70.70px;top:604.08px;line-height:1.4;font-size:9.9px;color:#c9c8c0;font-weight:normal;width:188.5px;overflow:hidden">java.scripting<span style="font-weight:normal;color:#807e74;font-size:9.9px;margin-left:5.6px">library root</span></div>

<svg class="a" style="left:44.1px;top:620.4px" width="8" height="8" viewBox="0 0 8 8"><path d="M2.5 1.0L5.5 4.0L2.5 7.0" stroke="#b4b5b6" stroke-width="1.15" fill="none"/></svg>
<svg style="position:absolute;left:57.6px;top:619.9px" width="12" height="11" viewBox="0 0 12 11"><path d="M0.5 1.5h3.5l1 1.2H10v6H0.5z" fill="#a4adb3"/><rect x="5.5" y="5.5" width="5.5" height="5" fill="#40b6e0"/></svg>
<div class="t" style="left:70.70px;top:618.48px;line-height:1.4;font-size:9.9px;color:#c9c8c0;font-weight:normal;width:188.5px;overflow:hidden">java.se<span style="font-weight:normal;color:#807e74;font-size:9.9px;margin-left:5.6px">library root</span></div>

<svg class="a" style="left:44.1px;top:634.8px" width="8" height="8" viewBox="0 0 8 8"><path d="M2.5 1.0L5.5 4.0L2.5 7.0" stroke="#b4b5b6" stroke-width="1.15" fill="none"/></svg>
<svg style="position:absolute;left:57.6px;top:634.3px" width="12" height="11" viewBox="0 0 12 11"><path d="M0.5 1.5h3.5l1 1.2H10v6H0.5z" fill="#a4adb3"/><rect x="5.5" y="5.5" width="5.5" height="5" fill="#40b6e0"/></svg>
<div class="t" style="left:70.70px;top:632.87px;line-height:1.4;font-size:9.9px;color:#c9c8c0;font-weight:normal;width:188.5px;overflow:hidden">java.security.jgss<span style="font-weight:normal;color:#807e74;font-size:9.9px;margin-left:5.6px">library root</span></div>

<svg class="a" style="left:44.1px;top:649.2px" width="8" height="8" viewBox="0 0 8 8"><path d="M2.5 1.0L5.5 4.0L2.5 7.0" stroke="#b4b5b6" stroke-width="1.15" fill="none"/></svg>
<svg style="position:absolute;left:57.6px;top:648.7px" width="12" height="11" viewBox="0 0 12 11"><path d="M0.5 1.5h3.5l1 1.2H10v6H0.5z" fill="#a4adb3"/><rect x="5.5" y="5.5" width="5.5" height="5" fill="#40b6e0"/></svg>
<div class="t" style="left:70.70px;top:647.26px;line-height:1.4;font-size:9.9px;color:#c9c8c0;font-weight:normal;width:188.5px;overflow:hidden">java.security.sasl<span style="font-weight:normal;color:#807e74;font-size:9.9px;margin-left:5.6px">library root</span></div>

<svg class="a" style="left:44.1px;top:663.6px" width="8" height="8" viewBox="0 0 8 8"><path d="M2.5 1.0L5.5 4.0L2.5 7.0" stroke="#b4b5b6" stroke-width="1.15" fill="none"/></svg>
<svg style="position:absolute;left:57.6px;top:663.1px" width="12" height="11" viewBox="0 0 12 11"><path d="M0.5 1.5h3.5l1 1.2H10v6H0.5z" fill="#a4adb3"/><rect x="5.5" y="5.5" width="5.5" height="5" fill="#40b6e0"/></svg>
<div class="t" style="left:70.70px;top:661.66px;line-height:1.4;font-size:9.9px;color:#c9c8c0;font-weight:normal;width:188.5px;overflow:hidden">java.smartcardio<span style="font-weight:normal;color:#807e74;font-size:9.9px;margin-left:5.6px">library root</span></div>

<svg class="a" style="left:44.1px;top:678.0px" width="8" height="8" viewBox="0 0 8 8"><path d="M2.5 1.0L5.5 4.0L2.5 7.0" stroke="#b4b5b6" stroke-width="1.15" fill="none"/></svg>
<svg style="position:absolute;left:57.6px;top:677.5px" width="12" height="11" viewBox="0 0 12 11"><path d="M0.5 1.5h3.5l1 1.2H10v6H0.5z" fill="#a4adb3"/><rect x="5.5" y="5.5" width="5.5" height="5" fill="#40b6e0"/></svg>
<div class="t" style="left:70.70px;top:676.06px;line-height:1.4;font-size:9.9px;color:#c9c8c0;font-weight:normal;width:188.5px;overflow:hidden">java.sql<span style="font-weight:normal;color:#807e74;font-size:9.9px;margin-left:5.6px">library root</span></div>
<div class="a" style="left:259.20px;top:36.30px;width:733.50px;height:19.50px;background:#3e3f41;"></div>
<div class="a" style="left:259.20px;top:36.30px;width:0.80px;height:653.00px;background:#2b2d2f;"></div>
<div class="a" style="left:612.80px;top:36.30px;width:148.00px;height:19.50px;background:#45463f;"></div>
<div class="a" style="left:612.80px;top:53.90px;width:148.00px;height:2.00px;background:#5a8cc2;"></div>
<svg style="position:absolute;left:267.1px;top:40.7px" width="12" height="11" viewBox="0 0 12 11"><rect x="2.5" y="0.5" width="6" height="9" fill="#9aa3a9"/><rect x="6" y="7" width="3" height="3" fill="#111"/></svg>
<div class="t" style="left:279.60px;top:42.50px;font-size:8.4px;color:#c6c7c8;font-weight:normal;font-family:"Liberation Sans",sans-serif;">AppsTorrent Test.iml</div>
<svg class="a" style="left:361.0px;top:43.1px" width="6" height="6" viewBox="0 0 6 6"><path d="M0.5 0.5L5.5 5.5M5.5 0.5L0.5 5.5" stroke="#626567" stroke-width="0.9"/></svg>
<svg style="position:absolute;left:377.6px;top:40.7px" width="12" height="11" viewBox="0 0 12 11"><path d="M2 1.2H8.5M2 2.6H8.5M2 4H8.5" stroke="#b8bfc4" stroke-width="1"/><rect x="6.5" y="0.5" width="2" height="4" fill="#b8bfc4"/><rect x="0" y="5.6" width="10.8" height="4.6" fill="#e0652d"/><path d="M3.6 7.9l1.2-1v2zM7.2 7.9l-1.2-1v2z" fill="#f4d6c6"/></svg>
<div class="t" style="left:392.10px;top:42.50px;font-size:8.4px;color:#c6c7c8;font-weight:normal;font-family:"Liberation Sans",sans-serif;">workspace.xml</div>
<svg class="a" style="left:452.8px;top:43.1px" width="6" height="6" viewBox="0 0 6 6"><path d="M0.5 0.5L5.5 5.5M5.5 0.5L0.5 5.5" stroke="#626567" stroke-width="0.9"/></svg>
<svg style="position:absolute;left:469.2px;top:40.7px" width="12" height="11" viewBox="0 0 12 11"><path d="M2 1.2H8.5M2 2.6H8.5M2 4H8.5" stroke="#b8bfc4" stroke-width="1"/><rect x="6.5" y="0.5" width="2" height="4" fill="#b8bfc4"/><rect x="0" y="5.6" width="10.8" height="4.8" fill="#3d95c4"/><rect x="2" y="6.8" width="2.2" height="2.6" fill="none" stroke="#d8e6ee" stroke-width="0.8"/><rect x="6" y="6.6" width="1" height="3" fill="#d8e6ee"/></svg>
<div class="t" style="left:483.60px;top:42.50px;font-size:8.4px;color:#c6c7c8;font-weight:normal;font-family:"Liberation Sans",sans-serif;">java.compiler/module-info.java</div>
<svg class="a" style="left:602.5px;top:43.1px" width="6" height="6" viewBox="0 0 6 6"><path d="M0.5 0.5L5.5 5.5M5.5 0.5L0.5 5.5" stroke="#626567" stroke-width="0.9"/></svg>
<svg style="position:absolute;left:619.8px;top:40.7px" width="12" height="11" viewBox="0 0 12 11"><path d="M2 1.2H8.5M2 2.6H8.5M2 4H8.5" stroke="#b8bfc4" stroke-width="1"/><rect x="6.5" y="0.5" width="2" height="4" fill="#b8bfc4"/><rect x="0" y="5.6" width="10.8" height="4.8" fill="#3d95c4"/><rect x="2" y="6.8" width="2.2" height="2.6" fill="none" stroke="#d8e6ee" stroke-width="0.8"/><rect x="6" y="6.6" width="1" height="3" fill="#d8e6ee"/></svg>
<div class="t" style="left:632.55px;top:42.50px;font-size:8.4px;color:#c6c7c8;font-weight:normal;font-family:"Liberation Sans",sans-serif;">java.desktop/module-info.java</div>
<svg class="a" style="left:749.8px;top:43.1px" width="6" height="6" viewBox="0 0 6 6"><path d="M0.5 0.5L5.5 5.5M5.5 0.5L0.5 5.5" stroke="#626567" stroke-width="0.9"/></svg>
<svg style="position:absolute;left:767.3px;top:40.7px" width="12" height="11" viewBox="0 0 12 11"><path d="M2 1.2H8.5M2 2.6H8.5M2 4H8.5" stroke="#b8bfc4" stroke-width="1"/><rect x="6.5" y="0.5" width="2" height="4" fill="#b8bfc4"/><rect x="0" y="5.6" width="10.8" height="4.6" fill="#e0652d"/><path d="M3.6 7.9l1.2-1v2zM7.2 7.9l-1.2-1v2z" fill="#f4d6c6"/></svg>
<div class="t" style="left:780.80px;top:42.50px;font-size:8.4px;color:#c6c7c8;font-weight:normal;font-family:"Liberation Sans",sans-serif;">misc.xml</div>
<svg class="a" style="left:818.8px;top:43.1px" width="6" height="6" viewBox="0 0 6 6"><path d="M0.5 0.5L5.5 5.5M5.5 0.5L0.5 5.5" stroke="#626567" stroke-width="0.9"/></svg>
<svg style="position:absolute;left:836.8px;top:40.7px" width="12" height="11" viewBox="0 0 12 11"><path d="M2 1.2H8.5M2 2.6H8.5M2 4H8.5" stroke="#b8bfc4" stroke-width="1"/><rect x="6.5" y="0.5" width="2" height="4" fill="#b8bfc4"/><rect x="0" y="5.6" width="10.8" height="4.6" fill="#e0652d"/><path d="M3.6 7.9l1.2-1v2zM7.2 7.9l-1.2-1v2z" fill="#f4d6c6"/></svg>
<div class="t" style="left:850.70px;top:42.50px;font-size:8.4px;color:#c6c7c8;font-weight:normal;font-family:"Liberation Sans",sans-serif;">kotlinc.xml</div>
<svg class="a" style="left:895.6px;top:43.1px" width="6" height="6" viewBox="0 0 6 6"><path d="M0.5 0.5L5.5 5.5M5.5 0.5L0.5 5.5" stroke="#626567" stroke-width="0.9"/></svg>
<svg style="position:absolute;left:912.8px;top:40.7px" width="12" height="11" viewBox="0 0 12 11"><path d="M2 1.2H8.5M2 2.6H8.5M2 4H8.5" stroke="#b8bfc4" stroke-width="1"/><rect x="6.5" y="0.5" width="2" height="4" fill="#b8bfc4"/><rect x="0" y="5.6" width="10.8" height="4.6" fill="#e0652d"/><path d="M3.6 7.9l1.2-1v2zM7.2 7.9l-1.2-1v2z" fill="#f4d6c6"/></svg>
<div class="t" style="left:926.30px;top:42.50px;font-size:8.4px;color:#c6c7c8;font-weight:normal;font-family:"Liberation Sans",sans-serif;">modules.xml</div>
<svg class="a" style="left:978.8px;top:43.1px" width="6" height="6" viewBox="0 0 6 6"><path d="M0.5 0.5L5.5 5.5M5.5 0.5L0.5 5.5" stroke="#626567" stroke-width="0.9"/></svg>
<div class="a" style="left:259.20px;top:55.80px;width:733.50px;height:0.80px;background:#323232;"></div>
<div class="a" style="left:260.00px;top:56.30px;width:732.70px;height:633.00px;background:#313335;"></div>
<div class="a" style="left:304.40px;top:56.30px;width:688.30px;height:617.20px;background:#2b2b2b;"></div>
<div class="a" style="left:303.80px;top:56.30px;width:1.60px;height:617.20px;background:#424446;"></div>
<div class="a" style="left:331.60px;top:277.90px;width:0.80px;height:15.10px;background:#353535;"></div>
<div class="a" style="left:331.60px;top:323.20px;width:0.80px;height:15.10px;background:#353535;"></div>
<div class="a" style="left:331.60px;top:368.50px;width:0.80px;height:15.10px;background:#353535;"></div>
<div class="a" style="left:331.60px;top:413.80px;width:0.80px;height:15.10px;background:#353535;"></div>
<div class="a" style="left:331.60px;top:459.10px;width:0.80px;height:60.40px;background:#353535;"></div>
<div class="a" style="left:331.60px;top:549.70px;width:0.80px;height:15.10px;background:#353535;"></div>
<div class="a" style="left:331.60px;top:595.00px;width:0.80px;height:15.10px;background:#353535;"></div>
<div class="a" style="left:331.60px;top:640.30px;width:0.80px;height:33.20px;background:#353535;"></div>
<div class="a" style="left:259.20px;top:56.30px;width:733.5px;height:617.2px;overflow:hidden">
<div class="t m" style="left:3.60px;top:-2.10px;font-size:9.8px;letter-spacing:-0.2px;transform:scaleX(0.84);transform-origin:0 0;color:#7a7d80">134</div>
<div class="t m" style="left:72.90px;top:-2.10px;font-size:9.585px;color:#b4bfca;-webkit-text-stroke:0.4px currentColor"><span style="color:#cc8a52">uses</span> javax.imageio.spi.ImageWriterSpi<span style="color:#cc8a52">;</span></div>
<div class="t m" style="left:3.60px;top:13.00px;font-size:9.8px;letter-spacing:-0.2px;transform:scaleX(0.84);transform-origin:0 0;color:#7a7d80">135</div>
<div class="t m" style="left:72.90px;top:13.00px;font-size:9.585px;color:#b4bfca;-webkit-text-stroke:0.4px currentColor"><span style="color:#cc8a52">uses</span> javax.print.PrintServiceLookup<span style="color:#cc8a52">;</span></div>
<div class="t m" style="left:3.60px;top:28.10px;font-size:9.8px;letter-spacing:-0.2px;transform:scaleX(0.84);transform-origin:0 0;color:#7a7d80">136</div>
<div class="t m" style="left:72.90px;top:28.10px;font-size:9.585px;color:#b4bfca;-webkit-text-stroke:0.4px currentColor"><span style="color:#cc8a52">uses</span> javax.print.StreamPrintServiceFactory<span style="color:#cc8a52">;</span></div>
<div class="t m" style="left:3.60px;top:43.20px;font-size:9.8px;letter-spacing:-0.2px;transform:scaleX(0.84);transform-origin:0 0;color:#7a7d80">137</div>
<div class="t m" style="left:72.90px;top:43.20px;font-size:9.585px;color:#b4bfca;-webkit-text-stroke:0.4px currentColor"><span style="color:#cc8a52">uses</span> javax.sound.midi.spi.MidiDeviceProvider<span style="color:#cc8a52">;</span></div>
<div class="t m" style="left:3.60px;top:58.30px;font-size:9.8px;letter-spacing:-0.2px;transform:scaleX(0.84);transform-origin:0 0;color:#7a7d80">138</div>
<div class="t m" style="left:72.90px;top:58.30px;font-size:9.585px;color:#b4bfca;-webkit-text-stroke:0.4px currentColor"><span style="color:#cc8a52">uses</span> javax.sound.midi.spi.MidiFileReader<span style="color:#cc8a52">;</span></div>
<div class="t m" style="left:3.60px;top:73.40px;font-size:9.8px;letter-spacing:-0.2px;transform:scaleX(0.84);transform-origin:0 0;color:#7a7d80">139</div>
<div class="t m" style="left:72.90px;top:73.40px;font-size:9.585px;color:#b4bfca;-webkit-text-stroke:0.4px currentColor"><span style="color:#cc8a52">uses</span> javax.sound.midi.spi.MidiFileWriter<span style="color:#cc8a52">;</span></div>
<div class="t m" style="left:3.60px;top:88.50px;font-size:9.8px;letter-spacing:-0.2px;transform:scaleX(0.84);transform-origin:0 0;color:#7a7d80">140</div>
<div class="t m" style="left:72.90px;top:88.50px;font-size:9.585px;color:#b4bfca;-webkit-text-stroke:0.4px currentColor"><span style="color:#cc8a52">uses</span> javax.sound.midi.spi.SoundbankReader<span style="color:#cc8a52">;</span></div>
<div class="t m" style="left:3.60px;top:103.60px;font-size:9.8px;letter-spacing:-0.2px;transform:scaleX(0.84);transform-origin:0 0;color:#7a7d80">141</div>
<div class="t m" style="left:72.90px;top:103.60px;font-size:9.585px;color:#b4bfca;-webkit-text-stroke:0.4px currentColor"><span style="color:#cc8a52">uses</span> javax.sound.sampled.spi.AudioFileReader<span style="color:#cc8a52">;</span></div>
<div class="t m" style="left:3.60px;top:118.70px;font-size:9.8px;letter-spacing:-0.2px;transform:scaleX(0.84);transform-origin:0 0;color:#7a7d80">142</div>
<div class="t m" style="left:72.90px;top:118.70px;font-size:9.585px;color:#b4bfca;-webkit-text-stroke:0.4px currentColor"><span style="color:#cc8a52">uses</span> javax.sound.sampled.spi.AudioFileWriter<span style="color:#cc8a52">;</span></div>
<div class="t m" style="left:3.60px;top:133.80px;font-size:9.8px;letter-spacing:-0.2px;transform:scaleX(0.84);transform-origin:0 0;color:#7a7d80">143</div>
<div class="t m" style="left:72.90px;top:133.80px;font-size:9.585px;color:#b4bfca;-webkit-text-stroke:0.4px currentColor"><span style="color:#cc8a52">uses</span> javax.sound.sampled.spi.FormatConversionProvider<span style="color:#cc8a52">;</span></div>
<div class="t m" style="left:3.60px;top:148.90px;font-size:9.8px;letter-spacing:-0.2px;transform:scaleX(0.84);transform-origin:0 0;color:#7a7d80">144</div>
<div class="t m" style="left:72.90px;top:148.90px;font-size:9.585px;color:#b4bfca;-webkit-text-stroke:0.4px currentColor"><span style="color:#cc8a52">uses</span> javax.sound.sampled.spi.MixerProvider<span style="color:#cc8a52">;</span></div>
<div class="t m" style="left:3.60px;top:164.00px;font-size:9.8px;letter-spacing:-0.2px;transform:scaleX(0.84);transform-origin:0 0;color:#7a7d80">145</div>
<div class="t m" style="left:3.60px;top:179.10px;font-size:9.8px;letter-spacing:-0.2px;transform:scaleX(0.84);transform-origin:0 0;color:#7a7d80">146</div>
<div class="t m" style="left:72.90px;top:179.10px;font-size:9.585px;color:#b4bfca;-webkit-text-stroke:0.4px currentColor"><span style="color:#cc8a52">uses</span> sun.swing.InteropProvider<span style="color:#cc8a52">;</span></div>
<div class="t m" style="left:3.60px;top:194.20px;font-size:9.8px;letter-spacing:-0.2px;transform:scaleX(0.84);transform-origin:0 0;color:#7a7d80">147</div>
<div class="t m" style="left:3.60px;top:209.30px;font-size:9.8px;letter-spacing:-0.2px;transform:scaleX(0.84);transform-origin:0 0;color:#7a7d80">148</div>
<div class="t m" style="left:72.90px;top:209.30px;font-size:9.585px;color:#b4bfca;-webkit-text-stroke:0.4px currentColor"><span style="color:#cc8a52">provides</span> sun.datatransfer.DesktopDatatransferService <span style="color:#cc8a52">with</span></div>
<div class="t m" style="left:3.60px;top:224.40px;font-size:9.8px;letter-spacing:-0.2px;transform:scaleX(0.84);transform-origin:0 0;color:#7a7d80">149</div>
<div class="t m" style="left:95.90px;top:224.40px;font-size:9.585px;color:#b4bfca;-webkit-text-stroke:0.4px currentColor">sun.awt.datatransfer.DesktopDatatransferServiceImpl<span style="color:#cc8a52">;</span></div>
<div class="t m" style="left:3.60px;top:239.50px;font-size:9.8px;letter-spacing:-0.2px;transform:scaleX(0.84);transform-origin:0 0;color:#7a7d80">150</div>
<div class="t m" style="left:3.60px;top:254.60px;font-size:9.8px;letter-spacing:-0.2px;transform:scaleX(0.84);transform-origin:0 0;color:#7a7d80">151</div>
<div class="t m" style="left:72.90px;top:254.60px;font-size:9.585px;color:#b4bfca;-webkit-text-stroke:0.4px currentColor"><span style="color:#cc8a52">provides</span> java.net.ContentHandlerFactory <span style="color:#cc8a52">with</span></div>
<div class="t m" style="left:3.60px;top:269.70px;font-size:9.8px;letter-spacing:-0.2px;transform:scaleX(0.84);transform-origin:0 0;color:#7a7d80">152</div>
<div class="t m" style="left:95.90px;top:269.70px;font-size:9.585px;color:#b4bfca;-webkit-text-stroke:0.4px currentColor">sun.awt.www.content.MultimediaContentHandlers<span style="color:#cc8a52">;</span></div>
<div class="t m" style="left:3.60px;top:284.80px;font-size:9.8px;letter-spacing:-0.2px;transform:scaleX(0.84);transform-origin:0 0;color:#7a7d80">153</div>
<div class="t m" style="left:3.60px;top:299.90px;font-size:9.8px;letter-spacing:-0.2px;transform:scaleX(0.84);transform-origin:0 0;color:#7a7d80">154</div>
<div class="t m" style="left:72.90px;top:299.90px;font-size:9.585px;color:#b4bfca;-webkit-text-stroke:0.4px currentColor"><span style="color:#cc8a52">provides</span> javax.print.PrintServiceLookup <span style="color:#cc8a52">with</span></div>
<div class="t m" style="left:3.60px;top:315.00px;font-size:9.8px;letter-spacing:-0.2px;transform:scaleX(0.84);transform-origin:0 0;color:#7a7d80">155</div>
<div class="t m" style="left:95.90px;top:315.00px;font-size:9.585px;color:#b4bfca;-webkit-text-stroke:0.4px currentColor">sun.print.PrintServiceLookupProvider<span style="color:#cc8a52">;</span></div>
<div class="t m" style="left:3.60px;top:330.10px;font-size:9.8px;letter-spacing:-0.2px;transform:scaleX(0.84);transform-origin:0 0;color:#7a7d80">156</div>
<div class="t m" style="left:3.60px;top:345.20px;font-size:9.8px;letter-spacing:-0.2px;transform:scaleX(0.84);transform-origin:0 0;color:#7a7d80">157</div>
<div class="t m" style="left:72.90px;top:345.20px;font-size:9.585px;color:#b4bfca;-webkit-text-stroke:0.4px currentColor"><span style="color:#cc8a52">provides</span> javax.print.StreamPrintServiceFactory <span style="color:#cc8a52">with</span></div>
<div class="t m" style="left:3.60px;top:360.30px;font-size:9.8px;letter-spacing:-0.2px;transform:scaleX(0.84);transform-origin:0 0;color:#7a7d80">158</div>
<div class="t m" style="left:95.90px;top:360.30px;font-size:9.585px;color:#b4bfca;-webkit-text-stroke:0.4px currentColor">sun.print.PSStreamPrinterFactory<span style="color:#cc8a52">;</span></div>
<div class="t m" style="left:3.60px;top:375.40px;font-size:9.8px;letter-spacing:-0.2px;transform:scaleX(0.84);transform-origin:0 0;color:#7a7d80">159</div>
<div class="t m" style="left:3.60px;top:390.50px;font-size:9.8px;letter-spacing:-0.2px;transform:scaleX(0.84);transform-origin:0 0;color:#7a7d80">160</div>
<div class="t m" style="left:72.90px;top:390.50px;font-size:9.585px;color:#b4bfca;-webkit-text-stroke:0.4px currentColor"><span style="color:#cc8a52">provides</span> javax.sound.midi.spi.MidiDeviceProvider <span style="color:#cc8a52">with</span></div>
<div class="t m" style="left:3.60px;top:405.60px;font-size:9.8px;letter-spacing:-0.2px;transform:scaleX(0.84);transform-origin:0 0;color:#7a7d80">161</div>
<div class="t m" style="left:95.90px;top:405.60px;font-size:9.585px;color:#b4bfca;-webkit-text-stroke:0.4px currentColor">com.sun.media.sound.MidiInDeviceProvider<span style="color:#cc8a52">,</span></div>
<div class="t m" style="left:3.60px;top:420.70px;font-size:9.8px;letter-spacing:-0.2px;transform:scaleX(0.84);transform-origin:0 0;color:#7a7d80">162</div>
<div class="t m" style="left:95.90px;top:420.70px;font-size:9.585px;color:#b4bfca;-webkit-text-stroke:0.4px currentColor">com.sun.media.sound.MidiOutDeviceProvider<span style="color:#cc8a52">,</span></div>
<div class="t m" style="left:3.60px;top:435.80px;font-size:9.8px;letter-spacing:-0.2px;transform:scaleX(0.84);transform-origin:0 0;color:#7a7d80">163</div>
<div class="t m" style="left:95.90px;top:435.80px;font-size:9.585px;color:#b4bfca;-webkit-text-stroke:0.4px currentColor">com.sun.media.sound.RealTimeSequencerProvider<span style="color:#cc8a52">,</span></div>
<div class="t m" style="left:3.60px;top:450.90px;font-size:9.8px;letter-spacing:-0.2px;transform:scaleX(0.84);transform-origin:0 0;color:#7a7d80">164</div>
<div class="t m" style="left:95.90px;top:450.90px;font-size:9.585px;color:#b4bfca;-webkit-text-stroke:0.4px currentColor">com.sun.media.sound.SoftProvider<span style="color:#cc8a52">;</span></div>
<div class="t m" style="left:3.60px;top:466.00px;font-size:9.8px;letter-spacing:-0.2px;transform:scaleX(0.84);transform-origin:0 0;color:#7a7d80">165</div>
<div class="t m" style="left:3.60px;top:481.10px;font-size:9.8px;letter-spacing:-0.2px;transform:scaleX(0.84);transform-origin:0 0;color:#7a7d80">166</div>
<div class="t m" style="left:72.90px;top:481.10px;font-size:9.585px;color:#b4bfca;-webkit-text-stroke:0.4px currentColor"><span style="color:#cc8a52">provides</span> javax.sound.midi.spi.MidiFileReader <span style="color:#cc8a52">with</span></div>
<div class="t m" style="left:3.60px;top:496.20px;font-size:9.8px;letter-spacing:-0.2px;transform:scaleX(0.84);transform-origin:0 0;color:#7a7d80">167</div>
<div class="t m" style="left:95.90px;top:496.20px;font-size:9.585px;color:#b4bfca;-webkit-text-stroke:0.4px currentColor">com.sun.media.sound.StandardMidiFileReader<span style="color:#cc8a52">;</span></div>
<div class="t m" style="left:3.60px;top:511.30px;font-size:9.8px;letter-spacing:-0.2px;transform:scaleX(0.84);transform-origin:0 0;color:#7a7d80">168</div>
<div class="t m" style="left:3.60px;top:526.40px;font-size:9.8px;letter-spacing:-0.2px;transform:scaleX(0.84);transform-origin:0 0;color:#7a7d80">169</div>
<div class="t m" style="left:72.90px;top:526.40px;font-size:9.585px;color:#b4bfca;-webkit-text-stroke:0.4px currentColor"><span style="color:#cc8a52">provides</span> javax.sound.midi.spi.MidiFileWriter <span style="color:#cc8a52">with</span></div>
<div class="t m" style="left:3.60px;top:541.50px;font-size:9.8px;letter-spacing:-0.2px;transform:scaleX(0.84);transform-origin:0 0;color:#7a7d80">170</div>
<div class="t m" style="left:95.90px;top:541.50px;font-size:9.585px;color:#b4bfca;-webkit-text-stroke:0.4px currentColor">com.sun.media.sound.StandardMidiFileWriter<span style="color:#cc8a52">;</span></div>
<div class="t m" style="left:3.60px;top:556.60px;font-size:9.8px;letter-spacing:-0.2px;transform:scaleX(0.84);transform-origin:0 0;color:#7a7d80">171</div>
<div class="t m" style="left:3.60px;top:571.70px;font-size:9.8px;letter-spacing:-0.2px;transform:scaleX(0.84);transform-origin:0 0;color:#7a7d80">172</div>
<div class="t m" style="left:72.90px;top:571.70px;font-size:9.585px;color:#b4bfca;-webkit-text-stroke:0.4px currentColor"><span style="color:#cc8a52">provides</span> javax.sound.midi.spi.SoundbankReader <span style="color:#cc8a52">with</span></div>
<div class="t m" style="left:3.60px;top:586.80px;font-size:9.8px;letter-spacing:-0.2px;transform:scaleX(0.84);transform-origin:0 0;color:#7a7d80">173</div>
<div class="t m" style="left:95.90px;top:586.80px;font-size:9.585px;color:#b4bfca;-webkit-text-stroke:0.4px currentColor">com.sun.media.sound.AudioFileSoundbankReader<span style="color:#cc8a52">,</span></div>
<div class="t m" style="left:3.60px;top:601.90px;font-size:9.8px;letter-spacing:-0.2px;transform:scaleX(0.84);transform-origin:0 0;color:#7a7d80">174</div>
<div class="t m" style="left:95.90px;top:601.90px;font-size:9.585px;color:#b4bfca;-webkit-text-stroke:0.4px currentColor">com.sun.media.sound.DLSSoundbankReader<span style="color:#cc8a52">,</span></div>
<div class="t m" style="left:3.60px;top:617.00px;font-size:9.8px;letter-spacing:-0.2px;transform:scaleX(0.84);transform-origin:0 0;color:#7a7d80">175</div>
<div class="t m" style="left:95.90px;top:617.00px;font-size:9.585px;color:#b4bfca;-webkit-text-stroke:0.4px currentColor">com.sun.media.sound.JARSoundbankReader<span style="color:#cc8a52">,</span></div>
</div>
<div class="a" style="left:259.20px;top:36.30px;width:733.50px;height:0.01px;background:transparent;"></div>
<div class="t" style="left:915.80px;top:61.50px;font-size:8.0px;color:#c4c5c6;font-weight:normal;font-family:"Liberation Sans",sans-serif;">Reader Mode</div>
<div class="a" style="left:971.80px;top:59.50px;width:0.80px;height:12.00px;background:#3a3b3c;"></div>
<svg class="a" style="left:977.3px;top:61.0px" width="11" height="9" viewBox="0 0 11 9"><path d="M1 4.5L4 7.5L10 1.5" stroke="#5a9f5f" stroke-width="1.4" fill="none"/></svg>
<div class="a" style="left:984.60px;top:431.50px;width:6.00px;height:133.50px;background:#525456;border-radius:3px;box-shadow:0 0 0 0.6px #262728;"></div>
<div class="a" style="left:992.70px;top:36.30px;width:14.60px;height:683.00px;background:#3e3f41;"></div>
<div class="a" style="left:992.70px;top:36.30px;width:0.80px;height:653.00px;background:#2b2d2f;"></div>
<svg class="a" style="left:995.3px;top:43.0px" width="9" height="10" viewBox="0 0 9 10"><ellipse cx="4.5" cy="1.8" rx="4" ry="1.5" fill="#b9babb"/><rect x="0.5" y="1.8" width="8" height="7" fill="#b9babb"/><path d="M0.5 4.3H8.5M0.5 6.8H8.5" stroke="#3e3f41" stroke-width="0.7"/></svg>
<div class="t" style="left:999.80px;top:73.50px;font-size:8.3px;color:#d0d1d2;transform:translate(-50%,-50%) rotate(90deg);">Database</div>
<div class="a" style="left:0.30px;top:689.10px;width:1007.80px;height:15.60px;background:#3e3f41;"></div>
<div class="a" style="left:0.30px;top:689.10px;width:1007.80px;height:0.80px;background:#323436;"></div>
<svg class="a" style="left:22.6px;top:693.0px" width="8" height="8" viewBox="0 0 8 8"><path d="M0 1H1.5M3 1H8M0 4H1.5M3 4H8M0 7H1.5M3 7H8" stroke="#b9babb" stroke-width="1"/></svg>
<div class="t" style="left:34.40px;top:692.90px;font-size:8.4px;color:#c4c5c6;font-weight:normal;font-family:"Liberation Sans",sans-serif;">TODO</div>
<svg class="a" style="left:71.8px;top:693.0px" width="8" height="8" viewBox="0 0 8 8"><circle cx="4" cy="4" r="3.8" fill="#b9babb"/><path d="M4 2V5M4 6V6.8" stroke="#3e3f41" stroke-width="1.1"/></svg>
<div class="t" style="left:82.50px;top:693.00px;font-size:8.2px;color:#c4c5c6;font-weight:normal;font-family:"Liberation Sans",sans-serif;">Problems</div>
<svg class="a" style="left:133.5px;top:693.0px" width="9" height="8" viewBox="0 0 9 8"><rect x="0" y="0" width="9" height="8" fill="#b9babb"/><path d="M1.5 2L3.5 4L1.5 6M4.5 6.2H7" stroke="#3e3f41" stroke-width="0.9" fill="none"/></svg>
<div class="t" style="left:145.80px;top:693.00px;font-size:8.2px;color:#c4c5c6;font-weight:normal;font-family:"Liberation Sans",sans-serif;">Terminal</div>
<svg class="a" style="left:190.8px;top:692.5px" width="10" height="10" viewBox="0 0 10 10"><circle cx="4.5" cy="4.5" r="3.8" stroke="#b9babb" stroke-width="1" fill="none"/><path d="M5 4L9.5 7L5 9.8Z" fill="#b9babb"/></svg>
<div class="t" style="left:203.60px;top:693.00px;font-size:8.2px;color:#c4c5c6;font-weight:normal;font-family:"Liberation Sans",sans-serif;">Profiler</div>
<svg class="a" style="left:936.3px;top:692.0px" width="10" height="10" viewBox="0 0 10 10"><path d="M4.7 8.8A4 4 0 1 1 8.8 4.7V8.8Z" stroke="#b9babb" stroke-width="1" fill="none"/></svg>
<div class="t" style="left:948.80px;top:693.10px;font-size:8.0px;color:#c4c5c6;font-weight:normal;font-family:"Liberation Sans",sans-serif;">Event Log</div>
<div class="a" style="left:0.30px;top:704.70px;width:1007.80px;height:14.30px;background:#3e3f41;"></div>
<svg class="a" style="left:3.8px;top:707.3px" width="10" height="10" viewBox="0 0 10 10"><rect x="0.7" y="0.7" width="8.6" height="8.4" rx="1.2" fill="none" stroke="#a4a5a6" stroke-width="1.2"/><rect x="3" y="2" width="5" height="4.6" fill="#2a2b2c"/></svg>
<div class="t" style="left:22.60px;top:707.62px;font-size:8.35px;color:#c4c5c6;font-weight:normal;font-family:"Liberation Sans",sans-serif;">Download pre-built shared indexes: Pre-built JDK shared indexes reduce the indexing time and CPU load // Always download // Download once // Don&#x27;t show again // Configure... (4 minutes ago)</div>
<div class="t" style="left:897.60px;top:707.65px;font-size:8.3px;color:#c4c5c6;font-weight:normal;font-family:"Liberation Sans",sans-serif;">1:1</div>
<div class="t" style="left:915.80px;top:707.65px;font-size:8.3px;color:#6e7072;font-weight:normal;font-family:"Liberation Sans",sans-serif;">LF</div>
<div class="t" style="left:932.60px;top:707.61px;font-size:8.38px;color:#6e7072;font-weight:normal;font-family:"Liberation Sans",sans-serif;">UTF-8</div>
<div class="t" style="left:964.80px;top:707.55px;font-size:8.49px;color:#c4c5c6;font-weight:normal;font-family:"Liberation Sans",sans-serif;">4 spaces</div>
<div class="a" style="left:0;top:0;width:1007.8px;height:719px;border-radius:6px;box-shadow:inset 0 0 0 1px rgba(255,255,255,0.16);pointer-events:none"></div>
</div>
</body></html>
